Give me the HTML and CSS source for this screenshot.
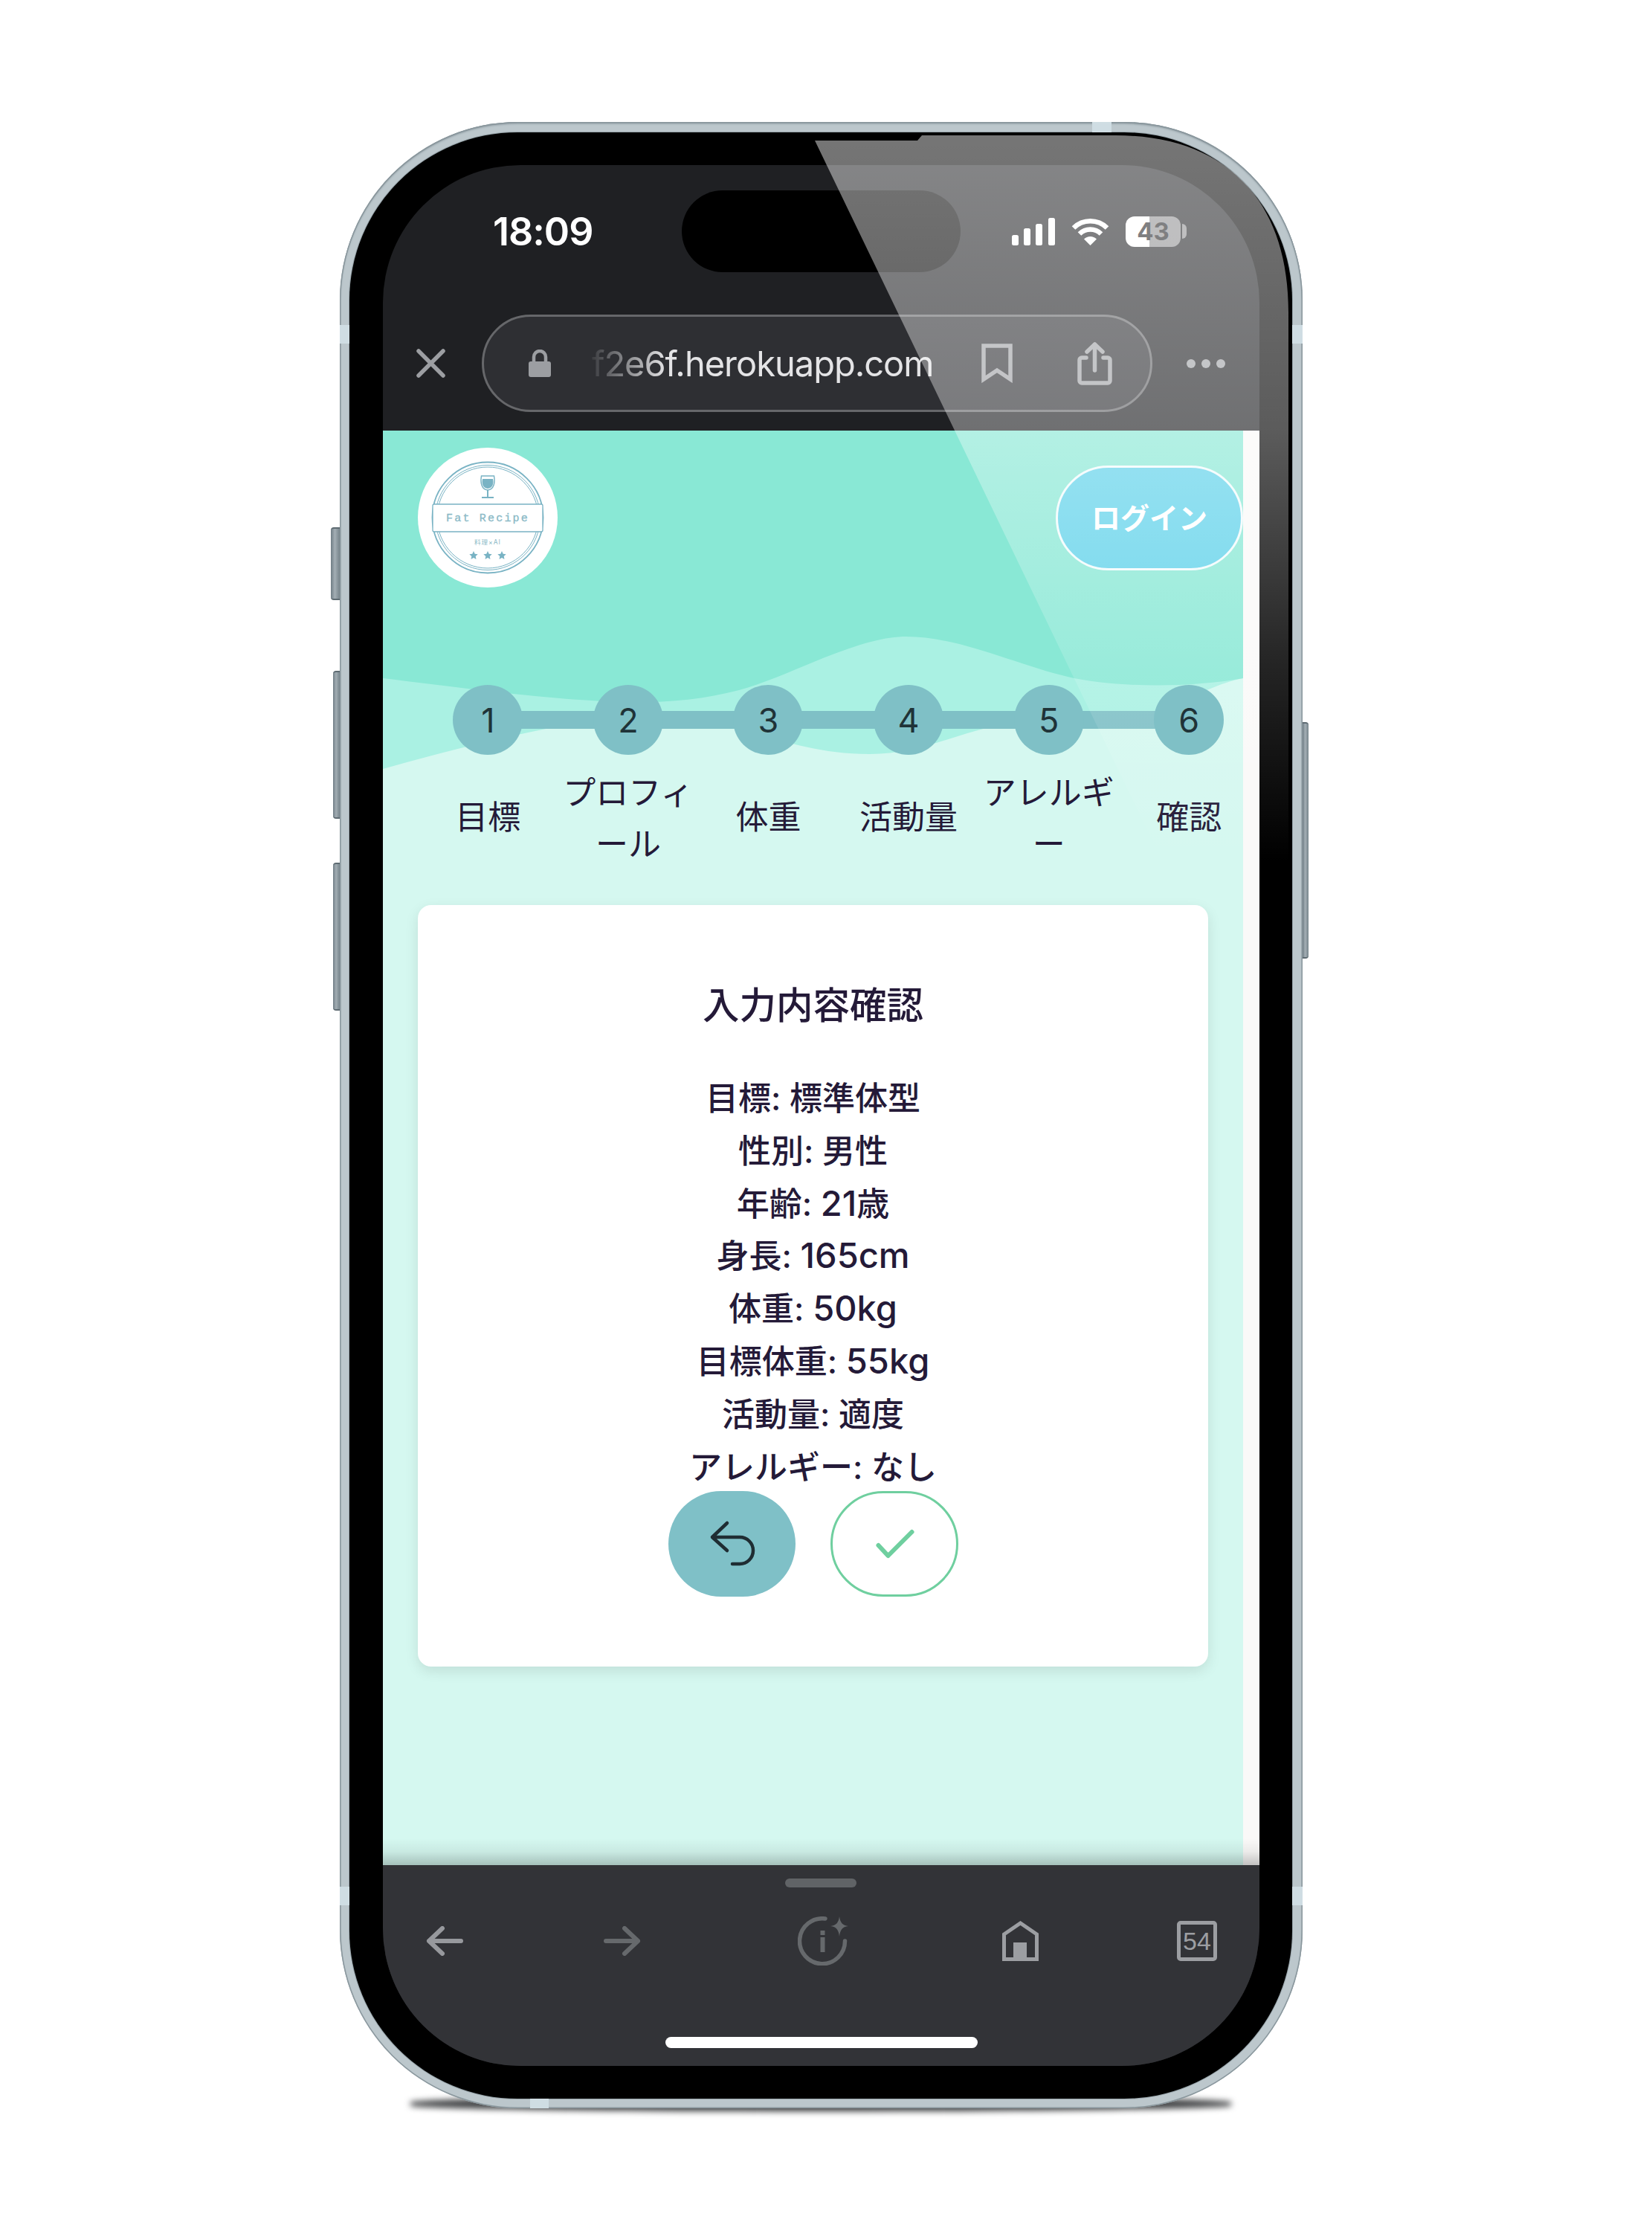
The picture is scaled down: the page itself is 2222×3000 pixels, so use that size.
FILE: index.html
```html
<!DOCTYPE html>
<html lang="ja">
<head>
  <meta charset="UTF-8">
  <title>入力内容確認</title>
  <link rel="stylesheet" href="styles.css">
</head>
<body>
  <div class="stage">
    <div class="phone">
      <div class="ground-shadow"></div>
      <!-- side buttons -->
      <span class="side-btn action"></span>
      <span class="side-btn vol-up"></span>
      <span class="side-btn vol-down"></span>
      <span class="side-btn power"></span>
      <!-- antenna bands -->
      <span class="band band-top"></span>
      <span class="band band-lt"></span>
      <span class="band band-rt"></span>
      <span class="band band-lb"></span>
      <span class="band band-rb"></span>
      <span class="band band-bottom"></span>

      <div class="bezel">
        <div class="screen">
          <div class="browser-top">
            <div class="status">
              <div class="time">18:09</div>
              <div class="island"></div>
              <svg class="signal" viewBox="0 0 58 37"><rect x="0" y="23" width="9" height="14" rx="2.5"/><rect x="16" y="14" width="9" height="23" rx="2.5"/><rect x="32" y="8" width="9" height="29" rx="2.5"/><rect x="49" y="0" width="9" height="37" rx="2.5"/></svg>
              <svg class="wifi" viewBox="0 0 51 37"><path class="wifi-arc" d="M3 13.5A32 32 0 0 1 48 13.5"/><path class="wifi-arc" d="M11 21.5A20.5 20.5 0 0 1 40 21.5"/><path class="wifi-dot" d="M25.5 37L17 28.5A12 12 0 0 1 34 28.5Z"/></svg>
              <div class="battery">43</div>
              <span class="battery-tip"></span>
            </div>
            <div class="url-row">
              <svg class="ic-close" viewBox="0 0 39 39"><path d="M3 3L36 36M36 3L3 36"/></svg>
              <div class="url-bar">
                <svg class="ic-lock" viewBox="0 0 30 37"><path class="lock-arc" d="M7 18V10a8 8 0 0 1 16 0V18"/><rect y="16" width="30" height="21" rx="3"/></svg>
                <span class="url-text">f2e6f.herokuapp.com</span>
                <svg class="ic-bookmark" viewBox="0 0 42 53"><path d="M3 3H39V48L21 36L3 48Z"/></svg>
                <svg class="ic-share" viewBox="0 0 47 58"><path d="M12 21H6a3 3 0 0 0-3 3V52a3 3 0 0 0 3 3H41a3 3 0 0 0 3-3V24a3 3 0 0 0-3-3H35M23.5 38V3M13 13L23.5 3L34 13"/></svg>
              </div>
              <div class="more"><i></i><i></i><i></i></div>
            </div>
          </div>

          <div class="page">
            <div class="page-inner">
              <svg class="wave" viewBox="515 579 1157 500">
                <path class="wave-mid" d="M515 579V1034C600 1010 680 990 760 975C830 964 930 972 986 979C1040 990 1090 1014 1170 1014C1230 1014 1280 990 1330 978C1400 962 1500 975 1560 955C1610 935 1640 918 1672 912V579Z"/>
                <path class="wave-top" d="M515 579V912C620 925 720 938 796 942C860 947 930 945 994 928C1040 915 1080 895 1120 880C1160 865 1190 856 1219 856C1290 856 1370 895 1436 910C1500 925 1600 925 1672 912V579Z"/>
              </svg>

              <header class="site-head">
                <div class="logo">
                  <svg viewBox="0 0 188 188">
                    <circle class="logo-ring" cx="94" cy="94" r="74.5"/>
                    <circle class="logo-ring thin" cx="94" cy="94" r="70.5"/>
                    <circle class="logo-ring thin" cx="94" cy="94" r="68"/>
                    <path class="logo-glass" d="M85.5 38H102.5C104 47 102.5 56 94 57C85.5 56 84 47 85.5 38Z"/>
                    <path class="logo-fill" d="M87 42H101C102.5 49 100 54.500 94 55C88 54.500 85.500 49 87 42Z"/>
                    <path class="logo-glass-foot" d="M94 57V66M86 67H102"/>
                    <rect class="logo-band" x="20" y="76" width="148" height="37" rx="2"/>
                    <text class="logo-name" x="94" y="98.500">Fat Recipe</text>
                    <text class="logo-sub" x="94" y="130">料理×AI</text>
                    <path class="logo-star" d="M75 139l1.700 3.700 4 .5-3 2.700.8 4-3.500-2-3.500 2 .8-4-3-2.700 4-.5zM94 139l1.700 3.700 4 .5-3 2.700.8 4-3.500-2-3.500 2 .8-4-3-2.700 4-.5zM113 139l1.700 3.700 4 .5-3 2.700.8 4-3.500-2-3.500 2 .8-4-3-2.700 4-.5z"/>
                  </svg>
                </div>
                <button class="login">ログイン</button>
              </header>

              <ol class="stepper">
                <li class="step"><span class="step-num">1</span><span class="step-label">目標</span></li>
                <li class="step"><span class="step-num">2</span><span class="step-label">プロフィール</span></li>
                <li class="step"><span class="step-num">3</span><span class="step-label">体重</span></li>
                <li class="step"><span class="step-num">4</span><span class="step-label">活動量</span></li>
                <li class="step"><span class="step-num">5</span><span class="step-label">アレルギー</span></li>
                <li class="step"><span class="step-num">6</span><span class="step-label">確認</span></li>
              </ol>

              <section class="card">
                <h2 class="card-title">入力内容確認</h2>
                <ul class="summary">
                  <li>目標: 標準体型</li>
                  <li>性別: 男性</li>
                  <li>年齢: <span class="latin">21</span>歳</li>
                  <li>身長: <span class="latin">165cm</span></li>
                  <li>体重: <span class="latin">50kg</span></li>
                  <li>目標体重: <span class="latin">55kg</span></li>
                  <li>活動量: 適度</li>
                  <li>アレルギー: なし</li>
                </ul>
                <div class="actions">
                  <button class="btn btn-back">
                    <svg viewBox="0 0 64 64"><path d="M25 4L5 23L25 41M5 23H42a18 18 0 0 1 0 36H32"/></svg>
                  </button>
                  <button class="btn btn-ok">
                    <svg viewBox="0 0 64 64"><path d="M10.500 34L23.500 48L55.500 16"/></svg>
                  </button>
                </div>
              </section>
            </div>
          </div>

          <div class="toolbar">
            <span class="handle"></span>
            <div class="tool-icons">
              <svg class="ic-back" viewBox="0 0 50 40"><path d="M22 3L4 20L22 37M4 20H47"/></svg>
              <svg class="ic-forward" viewBox="0 0 50 40"><path d="M28 3L46 20L28 37M46 20H3"/></svg>
              <svg class="ic-info" viewBox="0 0 68 66">
                <path class="info-arc" d="M37 3A30.500 30.500 0 1 0 63.500 33"/>
                <rect x="30.500" y="19" width="6" height="6"/><rect x="30.500" y="28" width="6" height="20"/>
                <path d="M56 0C57 8 60 12 68 13C60 14 57 18 56 27C55 18 52 14 44 13C52 12 55 8 56 0Z"/>
              </svg>
              <svg class="ic-home" viewBox="0 0 49 54"><path class="home-line" d="M2.500 51.500V18L24.500 3L46.500 18V51.500Z"/><rect x="15" y="29" width="18" height="24"/></svg>
              <div class="tabs">54</div>
            </div>
            <span class="home-bar"></span>
          </div>
        </div>
      </div>

      <svg class="glare" viewBox="457 164 1295 2671">
        <defs>
          <linearGradient id="glare-fade" gradientUnits="userSpaceOnUse" x1="0" y1="189" x2="0" y2="1160">
            <stop offset="0" stop-color="#fff" stop-opacity=".46"/>
            <stop offset=".4" stop-color="#fff" stop-opacity=".36"/>
            <stop offset=".73" stop-color="#fff" stop-opacity=".14"/>
            <stop offset="1" stop-color="#fff" stop-opacity="0"/>
          </linearGradient>
        </defs>
        <path d="M1096 189H1234L1240 182H1500C1650 182 1733 270 1733 420V1400H1680Z"/>
      </svg>
    </div>
  </div>
</body>
</html>
```

FILE: styles.css
```css
* { box-sizing: border-box; }
html { background: #fff; }
body { margin: 0; font-family: Inter, "Noto Sans CJK JP", sans-serif; color: #241a38; }
svg { display: block; flex: none; }
button { font-family: inherit; cursor: pointer; }
ol, ul { list-style: none; margin: 0; padding: 0; }

.stage { height: 3000px; padding: 164px 0 0 457px; overflow: hidden; }

/* phone shell */
.phone {
  position: relative;
  width: 1295px;
  height: 2671px;
  padding: 14px 14px 13px 13px;
  border-radius: 240px;
  background: #bcc7cc;
  box-shadow: inset 0 0 0 1.500px #8a979d, inset 0 2px 3px #7f8d94;
}
.bezel {
  height: 100%;
  padding: 44px 44px 44px 45px;
  border-radius: 226px;
  background: #000;
  box-shadow: 0 0 0 1px #96a3a9;
}
.screen {
  display: flex;
  flex-direction: column;
  height: 100%;
  border-radius: 185px;
  overflow: hidden;
  background: #1f2023;
}
.ground-shadow {
  position: absolute;
  z-index: -1;
  left: 95px;
  top: 2655px;
  width: 1104px;
  height: 20px;
  border-radius: 50%/40%;
  background: #3a3c3e;
  filter: blur(4px);
}

.side-btn {
  position: absolute;
  border-radius: 4px 0 0 4px;
  background: linear-gradient(90deg, #6f7d85, #a3aeb4 45%, #76848b);
  border-top: 2px solid #5e6b72;
  border-bottom: 2px solid #5e6b72;
}
.action { left: -12px; top: 545px; width: 12px; height: 98px; }
.vol-up { left: -9px; top: 738px; width: 9px; height: 199px; }
.vol-down { left: -9px; top: 996px; width: 9px; height: 199px; }
.power { right: -8px; top: 807px; width: 8px; height: 318px; border-radius: 0 4px 4px 0; }

.band { position: absolute; background: #cfdde3; }
.band-top { left: 1012px; top: 0; width: 26px; height: 14px; }
.band-lt { left: 0; top: 273px; width: 13px; height: 25px; }
.band-rt { right: 0; top: 273px; width: 14px; height: 25px; }
.band-lb { left: 0; top: 2373px; width: 13px; height: 25px; }
.band-rb { right: 0; top: 2373px; width: 14px; height: 25px; }
.band-bottom { left: 256px; top: 2658px; width: 25px; height: 13px; }

.glare { position: absolute; left: 0; top: 0; width: 1295px; height: 2671px; pointer-events: none; }
.glare path { fill: url(#glare-fade); }

/* browser chrome, top */
.browser-top { flex: none; height: 357px; }
.status { display: flex; align-items: center; height: 110px; position: relative; top: 34px; padding-left: 148px; }
.time { width: 133px; margin-right: 121px; color: #fff; font-size: 52px; font-weight: 600; letter-spacing: -1px; white-space: nowrap; }
.island { width: 375px; height: 110px; margin-right: 69px; border-radius: 55px; background: #000; }
.signal { width: 58px; height: 37px; margin-right: 22px; fill: #fff; }
.wifi { width: 51px; height: 37px; margin-right: 22px; }
.wifi-arc { fill: none; stroke: #fff; stroke-width: 6.500; }
.wifi-dot { fill: #fff; }
.battery {
  width: 74px;
  height: 41px;
  border-radius: 12px;
  background: linear-gradient(90deg, #fff 43%, #8f8f91 43%);
  color: #1f2023;
  font-size: 33px;
  font-weight: 700;
  line-height: 41px;
  text-align: center;
}
.battery-tip { width: 6px; height: 20px; margin-left: 2px; border-radius: 0 6px 6px 0; background: #8f8f91; }

.url-row { display: flex; align-items: center; margin-top: 91px; padding-left: 45px; }
.ic-close { width: 39px; height: 39px; margin-right: 49px; }
.ic-close path { fill: none; stroke: #9c9ea2; stroke-width: 5.500; stroke-linecap: round; }
.url-bar {
  display: flex;
  align-items: center;
  width: 902px;
  height: 131px;
  padding-left: 60px;
  border: 3px solid #66676a;
  border-radius: 66px;
  background: #2e2f33;
}
.ic-lock { width: 30px; height: 37px; margin-right: 55px; fill: #9c9ea2; }
.lock-arc { fill: none; stroke: #9c9ea2; stroke-width: 4.500; }
.url-text {
  flex: none;
  width: 459px;
  color: #e4e4e6;
  font-size: 47px;
  letter-spacing: -1px;
  white-space: nowrap;
  -webkit-mask-image: linear-gradient(90deg, rgba(0,0,0,.08), #000 100px);
  mask-image: linear-gradient(90deg, rgba(0,0,0,.08), #000 100px);
}
.ic-bookmark { width: 42px; height: 53px; margin-left: 65px; }
.ic-bookmark path { fill: none; stroke: #a0a2a6; stroke-width: 5.500; }
.ic-share { width: 47px; height: 58px; margin-left: 87px; }
.ic-share path { fill: none; stroke: #a0a2a6; stroke-width: 5.500; stroke-linecap: round; stroke-linejoin: round; }
.more { display: flex; gap: 8px; margin-left: 46px; }
.more i { width: 12px; height: 12px; border-radius: 50%; background: #a0a2a6; }

/* web page */
.page { flex: 1; min-height: 0; background: #faf9f8; }
.page-inner { position: relative; width: 1157px; height: 100%; padding-top: 23px; background: #d5f8f0; }
.wave { position: absolute; left: 0; top: 0; width: 1157px; height: 500px; }
.wave-mid { fill: #aaf1e3; }
.wave-top { fill: #89e8d5; }

.site-head { position: relative; display: flex; align-items: center; justify-content: space-between; padding: 0 0 0 47px; }
.logo { width: 188px; height: 188px; border-radius: 50%; background: #fff; }
.logo-ring { fill: none; stroke: #79b3c4; stroke-width: 1.800; }
.logo-ring.thin { stroke-width: 1; }
.logo-glass { fill: #fff; stroke: #79b3c4; stroke-width: 1.500; }
.logo-fill { fill: #79b3c4; }
.logo-glass-foot { fill: none; stroke: #79b3c4; stroke-width: 2; }
.logo-band { fill: #fff; stroke: #79b3c4; stroke-width: 1.300; }
.logo-name { fill: #8ab9c6; stroke: #8ab9c6; stroke-width: .3; font-family: "Liberation Mono", monospace; font-size: 15px; letter-spacing: 2.200px; text-anchor: middle; }
.logo-sub { fill: #8ab9c6; font-size: 8.500px; letter-spacing: 1px; text-anchor: middle; }
.logo-star { fill: #79b3c4; }
.login {
  width: 252px;
  height: 141px;
  padding: 0 0 4px;
  border: 3px solid #f2fbfc;
  border-radius: 71px;
  background: #60d2ea;
  color: #fff;
  font-size: 39px;
  font-weight: 600;
}

.stepper {
  position: relative;
  display: grid;
  grid-template-columns: repeat(6, 188.600px);
  margin: 131px 0 0 47px;
  width: 1132px;
}
.step { position: relative; display: flex; flex-direction: column; align-items: center; }
.step:not(:last-child)::after {
  content: "";
  position: absolute;
  left: 50%;
  top: 35px;
  width: 100%;
  height: 24px;
  background: #7fc0c6;
}
.step-num {
  position: relative;
  z-index: 1;
  width: 94px;
  height: 94px;
  padding-top: 1px;
  border-radius: 50%;
  background: #7fc0c6;
  color: #1f3338;
  font-size: 45px;
  line-height: 94px;
  text-align: center;
}
.step-label {
  display: flex;
  align-items: center;
  justify-content: center;
  min-height: 135px;
  margin-top: 17px;
  font-size: 44px;
  line-height: 68.500px;
  text-align: center;
  line-break: anywhere;
}

.card {
  display: flex;
  flex-direction: column;
  width: 1063px;
  height: 1024px;
  margin: 48px 0 0 47px;
  padding-top: 97px;
  border-radius: 18px;
  background: #fff;
  box-shadow: 0 6px 18px rgba(0, 0, 0, .1);
  text-align: center;
}
.card-title { margin: 0; font-size: 49.500px; font-weight: 500; line-height: 76px; }
.summary { margin-top: 52px; font-size: 44px; font-weight: 500; line-height: 70.800px; }
.latin { font-size: 47px; line-height: 1; }
.actions { display: flex; justify-content: center; gap: 47px; margin-top: -3px; }
.btn {
  display: flex;
  align-items: center;
  justify-content: center;
  width: 172px;
  height: 142px;
  padding: 0;
  border-radius: 71px;
}
.btn svg { width: 64px; height: 64px; fill: none; }
.btn-back { border: 0; background: #7fc0c7; margin-left: 1px; width: 171px; }
.btn-back path { stroke: #1f2d33; stroke-width: 4.500; stroke-linecap: round; stroke-linejoin: round; }
.btn-ok { border: 3px solid #6fcf9f; background: #fff; }
.btn-ok path { stroke: #6fcf9f; stroke-width: 6; stroke-linecap: round; stroke-linejoin: round; }

/* browser chrome, bottom */
.toolbar { position: relative; flex: none; height: 270px; background: #323337; }
.toolbar::before {
  content: "";
  position: absolute;
  left: 0;
  right: 0;
  bottom: 100%;
  height: 36px;
  background: linear-gradient(transparent, rgba(0, 0, 0, .06) 50%, rgba(0, 0, 0, .22));
}
.handle { display: block; width: 96px; height: 12px; margin: 18px 0 0 541px; border-radius: 6px; background: #606366; }
.tool-icons { display: flex; align-items: center; height: 66px; margin-top: 39px; padding-left: 58px; }
.ic-back { width: 50px; height: 40px; }
.ic-back path { fill: none; stroke: #97999d; stroke-width: 6; stroke-linecap: round; stroke-linejoin: round; }
.ic-forward { width: 50px; height: 40px; margin-left: 189px; }
.ic-forward path { fill: none; stroke: #66696c; stroke-width: 6; stroke-linecap: round; stroke-linejoin: round; }
.ic-info { width: 68px; height: 66px; margin-left: 211px; fill: #66696c; }
.info-arc { fill: none; stroke: #66696c; stroke-width: 5.500; stroke-linecap: round; }
.ic-home { width: 49px; height: 54px; margin-left: 207px; fill: #9c9ea2; }
.home-line { fill: none; stroke: #9c9ea2; stroke-width: 5; }
.tabs {
  width: 54px;
  height: 54px;
  margin-left: 186px;
  border: 5px solid #9c9ea2;
  border-radius: 5px;
  color: #9c9ea2;
  font-family: "Liberation Sans", sans-serif;
  font-size: 34px;
  line-height: 44px;
  text-align: center;
}
.home-bar { display: block; width: 420px; height: 15px; margin: 96px 0 0 380px; border-radius: 8px; background: #fff; }
```
